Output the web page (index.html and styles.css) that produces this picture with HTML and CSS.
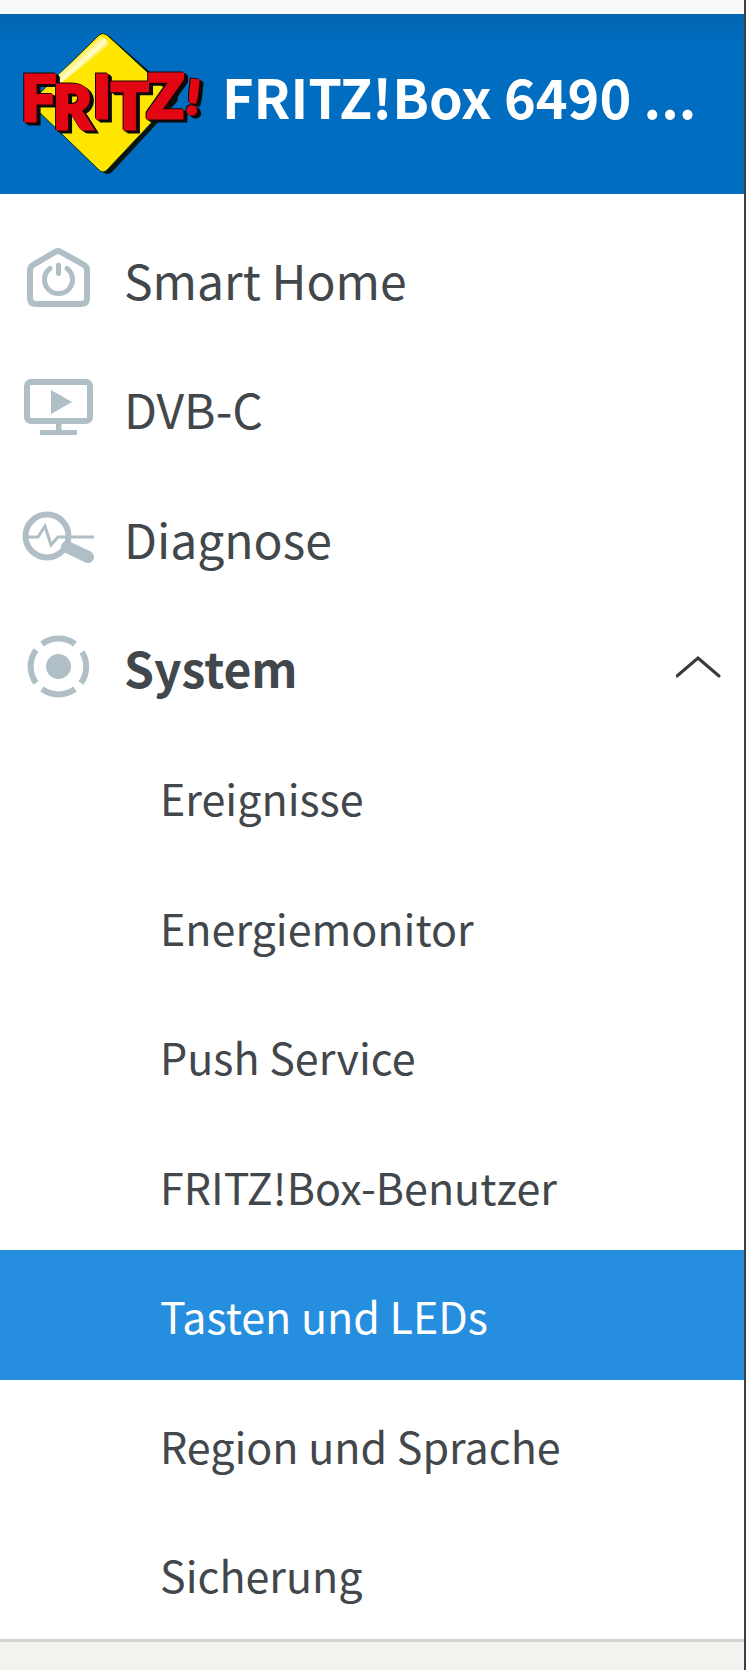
FILE: index.html
```html
<!DOCTYPE html>
<html lang="de">
<head>
    <meta charset="UTF-8">
    <meta name="viewport" content="width=device-width, initial-scale=1.0">
    <title>FRITZ!Box 6490</title>
    <link rel="stylesheet" href="styles.css">
</head>
<body>

<div class="menu">
    <header class="menu-header">
        <svg class="logo" viewBox="0 0 184 150" role="img" aria-label="FRITZ!">
            <defs>
                <linearGradient id="shine" gradientUnits="userSpaceOnUse" x1="56" y1="34" x2="64" y2="43">
                    <stop offset="0" stop-color="#fff27a"/>
                    <stop offset="0.4" stop-color="#fffbd0"/>
                    <stop offset="1" stop-color="#ffe600"/>
                </linearGradient>
            </defs>
            <path class="logo-shadow" d="M86 10 L154 70 Q158 74 154 78 L90 147 Q85 151 81 147 L60 128 Z"/>
            <path class="logo-diamond" d="M77 10 Q81 7 85 10 L149 69 Q153 73 149 77 L85 145 Q81 149 77 145 L12 82 Q8 78 12 74 Z"/>
            <path d="M77 13 L33 53 V63 L87 20 Q83 10 77 13 Z" fill="url(#shine)"/>
            <text class="logo-text">
                <tspan x="-1" y="96" font-size="62">F</tspan><tspan x="31" y="104" font-size="60">R</tspan><tspan x="71" y="93" font-size="59">I</tspan><tspan x="89" y="104" font-size="62">T</tspan><tspan x="125" y="93" font-size="61">Z</tspan><tspan x="163" y="88" font-size="46" rotate="6">!</tspan>
            </text>
        </svg>
        <h1>FRITZ!Box 6490 ...</h1>
    </header>

    <nav class="menu-nav">
        <ul class="menu-list">
            <li>
                <a href="#smarthome" class="menu-item">
                    <svg class="icon" viewBox="0 0 72 72" aria-hidden="true">
                        <path class="line" d="M8 27 Q8 24 11 22 L33 9 Q36 7 39 9 L62 22 Q65 24 65 27 V55 Q65 61 59 61 H14 Q8 61 8 55 Z"/>
                        <path class="line round thin" d="M28 25.500 A14 14 0 1 0 45 25.500 M36.500 22 V30.500"/>
                    </svg>
                    Smart Home
                </a>
            </li>
            <li>
                <a href="#dvbc" class="menu-item">
                    <svg class="icon" viewBox="0 0 72 72" aria-hidden="true">
                        <rect class="line" x="5" y="10" width="63" height="39" rx="4"/>
                        <path class="solid" d="M29 18 L50 30 L29 42 Z M34 51 H39.500 V58 H55 V63 H18 V58 H34 Z"/>
                    </svg>
                    DVB-C
                </a>
            </li>
            <li>
                <a href="#diagnose" class="menu-item">
                    <svg class="icon" viewBox="0 0 72 72" aria-hidden="true">
                        <circle class="line" cx="25" cy="34" r="21.500"/>
                        <path class="pulse" d="M6 35 H16 L23 24 L29 43 L36 35 H72"/>
                        <path class="handle" d="M45 45 L66 55"/>
                    </svg>
                    Diagnose
                </a>
            </li>
            <li>
                <button type="button" class="menu-item open" aria-expanded="true" aria-controls="system">
                    <svg class="icon" viewBox="0 0 72 72" aria-hidden="true">
                        <circle class="solid" cx="36.500" cy="35.500" r="12.500"/>
                        <path class="line" d="M20 13 A28 28 0 0 1 53 13 M20 58 A28 28 0 0 0 53 58 M14 19 A28 28 0 0 0 14 52 M60 21 A28 28 0 0 1 59 52"/>
                    </svg>
                    System
                    <svg class="chevron" viewBox="0 0 46 24" aria-hidden="true">
                        <path d="M1 21 L22 3 L43 21"/>
                    </svg>
                </button>
            </li>
            <li class="submenu">
                <ul id="system" class="menu-list">
                    <li><a href="#ereignisse" class="sub-item">Ereignisse</a></li>
                    <li><a href="#energiemonitor" class="sub-item">Energiemonitor</a></li>
                    <li><a href="#pushservice" class="sub-item">Push Service</a></li>
                    <li><a href="#benutzer" class="sub-item">FRITZ!Box-Benutzer</a></li>
                    <li><a href="#tasten" class="sub-item active" aria-current="page">Tasten und LEDs</a></li>
                    <li><a href="#region" class="sub-item">Region und Sprache</a></li>
                    <li><a href="#sicherung" class="sub-item">Sicherung</a></li>
                </ul>
            </li>
        </ul>
    </nav>

    <footer class="menu-footer"></footer>
</div>

</body>
</html>
```
FILE: styles.css
```css
* {
    box-sizing: border-box;
}

body {
    margin: 0;
    background-color: #3d3f42;
    color: #41474b;
    font-family: "Noto Sans CJK SC", "Noto Sans", sans-serif;
}

.menu {
    display: flex;
    flex-direction: column;
    min-height: 100vh;
    margin-right: 2px;
    background-color: #fff;
}

.menu-header {
    display: flex;
    align-items: center;
    gap: 16px;
    height: 194px;
    padding: 0 22px 8px;
    border-top: 14px solid #f8f9fa;
    background: linear-gradient(#0365b0, #006dc0 30px);
}

.menu-header h1 {
    margin: 0;
    padding-bottom: 8px;
    color: #fff;
    font-size: 54px;
    font-weight: 700;
    line-height: 64px;
    white-space: nowrap;
}

.logo {
    flex: none;
    width: 184px;
    height: 150px;
    overflow: visible;
}

.logo-shadow {
    fill: #0a1410;
}

.logo-diamond {
    fill: #ffe600;
    stroke: #12301c;
    stroke-width: 1;
}

.logo-text {
    fill: #e30613;
    stroke: #e30613;
    stroke-width: 3;
    font-family: Lato, sans-serif;
    font-weight: 900;
    filter: drop-shadow(1px 1px 0 #1c0506) drop-shadow(-1px -1px 0 #1c0506) drop-shadow(3px 2px 0 #0b0b0b);
}

.menu-nav {
    display: flex;
    flex: 1;
    padding-top: 20px;
}

.menu-list {
    display: flex;
    flex: 1;
    flex-direction: column;
    margin: 0;
    padding: 0;
    list-style: none;
}

.menu-list li {
    display: flex;
    flex: 1;
}

.menu-list .submenu {
    flex: 7;
}

.menu-item,
.sub-item {
    display: flex;
    flex: 1;
    align-items: center;
    color: inherit;
    text-decoration: none;
}

.menu-item {
    gap: 30px;
    padding: 0 22px;
    border: none;
    background: none;
    font-family: inherit;
    font-size: 48px;
    line-height: 72px;
    text-align: left;
}

.menu-item.open {
    font-weight: 700;
}

.sub-item {
    padding-left: 160px;
    font-size: 43px;
    line-height: 64px;
}

.sub-item.active {
    background-color: #268edf;
    color: #fff;
}

.icon {
    flex: none;
    width: 72px;
    height: 72px;
}

.icon .line {
    fill: none;
    stroke: #b0bec5;
    stroke-width: 6;
}

.icon .thin {
    stroke-width: 5;
}

.icon .round {
    stroke-linecap: round;
}

.icon .pulse {
    fill: none;
    stroke: #b0bec5;
    stroke-width: 3;
}

.icon .handle {
    stroke: #b0bec5;
    stroke-width: 12;
    stroke-linecap: round;
}

.icon .solid {
    fill: #b0bec5;
}

.chevron {
    width: 46px;
    height: 24px;
    margin-left: auto;
    fill: none;
    stroke: #37393b;
    stroke-width: 3;
    stroke-linecap: round;
}

.menu-footer {
    height: 31px;
    border-top: 3px solid #d4d4d4;
    background-color: #f4f2ef;
}
```
